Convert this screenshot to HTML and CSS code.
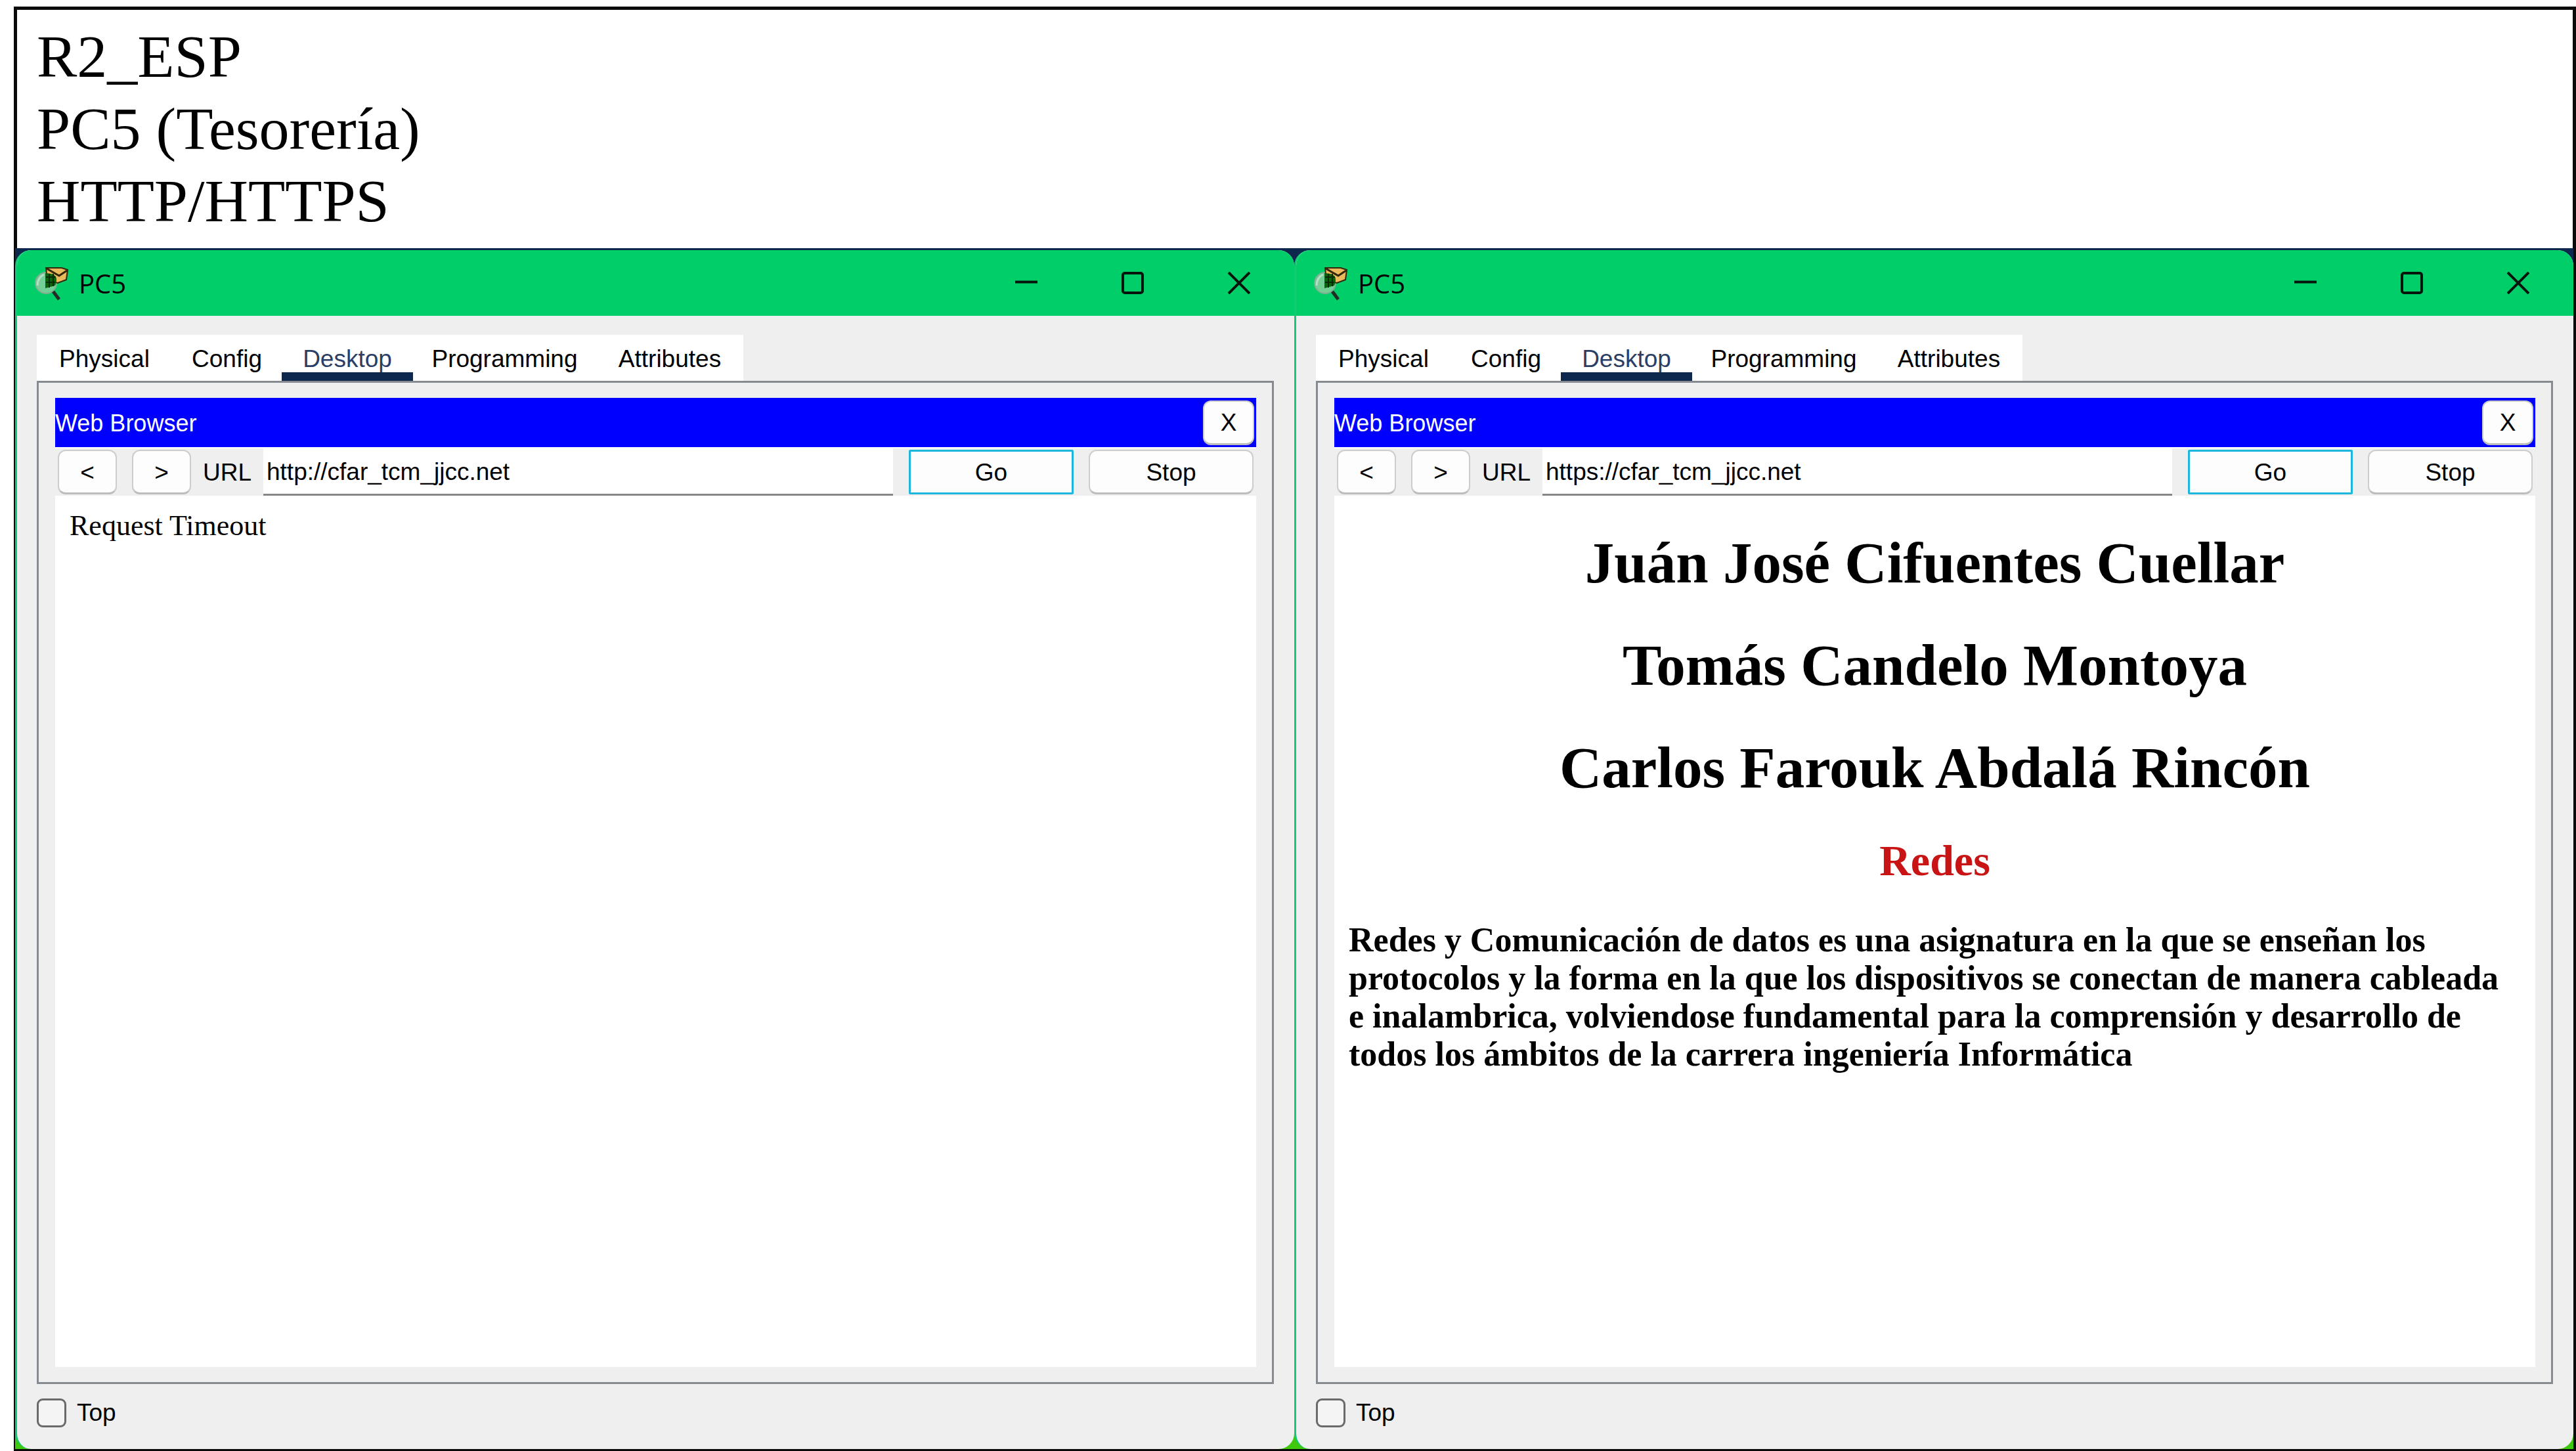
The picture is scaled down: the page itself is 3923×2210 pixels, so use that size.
FILE: index.html
```html
<!DOCTYPE html>
<html lang="es">
<head>
<meta charset="utf-8">
<title>R2_ESP - PC5 (Tesorería)</title>
<link rel="stylesheet" href="styles.css">
</head>
<body>
<main class="sheet">
  <header class="caption">
    <p>R2_ESP</p>
    <p>PC5 (Tesorería)</p>
    <p>HTTP/HTTPS</p>
  </header>
  <div class="windows">
    <section class="window">
      <div class="titlebar">
        <svg class="app-icon" viewBox="0 0 54 54" aria-hidden="true">
          <circle cx="18" cy="27" r="16" fill="#74cf97" stroke="#7fae92" stroke-width="2"/>
          <path d="M5 31Q5 19 15 14" fill="none" stroke="#b4e0c4" stroke-width="3"/>
          <path d="M18 4 42 4 51 7 49 22 36 27 20 23Z" fill="#e9b95c" stroke="#33270c" stroke-width="2"/>
          <path d="M19 5 38 16 50 8" fill="none" stroke="#33270c" stroke-width="3"/>
          <path d="M17 12Q34 12 34 22T28 32L17 35Z" fill="#0a640a"/>
          <path d="M18 18H33M18 26H32M23 13V34M29 13V32" stroke="#052a05" stroke-width="2"/>
          <path d="M29 40 38 52" stroke="#222b26" stroke-width="5"/>
        </svg>
        <h2 class="window-title">PC5</h2>
        <div class="controls">
          <button class="control" aria-label="Minimize"><svg viewBox="0 0 34 34"><path d="M0 15.5H34"/></svg></button>
          <button class="control" aria-label="Maximize"><svg viewBox="0 0 34 34"><rect x="2" y="2" width="30" height="30" rx="3"/></svg></button>
          <button class="control" aria-label="Close"><svg viewBox="0 0 34 34"><path d="M1 1 33 33M33 1 1 33"/></svg></button>
        </div>
      </div>
      <div class="window-body">
        <nav class="tabs">
          <button class="tab">Physical</button>
          <button class="tab">Config</button>
          <button class="tab active">Desktop</button>
          <button class="tab">Programming</button>
          <button class="tab">Attributes</button>
        </nav>
        <div class="panel">
          <div class="app-bar"><span class="app-name">Web Browser</span><button class="btn app-close">X</button></div>
          <form class="toolbar">
            <button type="button" class="btn nav-btn">&lt;</button>
            <button type="button" class="btn nav-btn">&gt;</button>
            <label class="url-label" for="url-1">URL</label>
            <input class="url" id="url-1" type="text" value="http://cfar_tcm_jjcc.net">
            <button type="button" class="btn go">Go</button>
            <button type="button" class="btn stop">Stop</button>
          </form>
          <article class="page"><p class="message">Request Timeout</p></article>
        </div>
        <label class="top-option"><input type="checkbox" class="check">Top</label>
      </div>
    </section>
    <section class="window">
      <div class="titlebar">
        <svg class="app-icon" viewBox="0 0 54 54" aria-hidden="true">
          <circle cx="18" cy="27" r="16" fill="#74cf97" stroke="#7fae92" stroke-width="2"/>
          <path d="M5 31Q5 19 15 14" fill="none" stroke="#b4e0c4" stroke-width="3"/>
          <path d="M18 4 42 4 51 7 49 22 36 27 20 23Z" fill="#e9b95c" stroke="#33270c" stroke-width="2"/>
          <path d="M19 5 38 16 50 8" fill="none" stroke="#33270c" stroke-width="3"/>
          <path d="M17 12Q34 12 34 22T28 32L17 35Z" fill="#0a640a"/>
          <path d="M18 18H33M18 26H32M23 13V34M29 13V32" stroke="#052a05" stroke-width="2"/>
          <path d="M29 40 38 52" stroke="#222b26" stroke-width="5"/>
        </svg>
        <h2 class="window-title">PC5</h2>
        <div class="controls">
          <button class="control" aria-label="Minimize"><svg viewBox="0 0 34 34"><path d="M0 15.5H34"/></svg></button>
          <button class="control" aria-label="Maximize"><svg viewBox="0 0 34 34"><rect x="2" y="2" width="30" height="30" rx="3"/></svg></button>
          <button class="control" aria-label="Close"><svg viewBox="0 0 34 34"><path d="M1 1 33 33M33 1 1 33"/></svg></button>
        </div>
      </div>
      <div class="window-body">
        <nav class="tabs">
          <button class="tab">Physical</button>
          <button class="tab">Config</button>
          <button class="tab active">Desktop</button>
          <button class="tab">Programming</button>
          <button class="tab">Attributes</button>
        </nav>
        <div class="panel">
          <div class="app-bar"><span class="app-name">Web Browser</span><button class="btn app-close">X</button></div>
          <form class="toolbar">
            <button type="button" class="btn nav-btn">&lt;</button>
            <button type="button" class="btn nav-btn">&gt;</button>
            <label class="url-label" for="url-2">URL</label>
            <input class="url" id="url-2" type="text" value="https://cfar_tcm_jjcc.net">
            <button type="button" class="btn go">Go</button>
            <button type="button" class="btn stop">Stop</button>
          </form>
          <article class="page">
            <h1 class="name">Juán José Cifuentes Cuellar</h1>
            <h1 class="name">Tomás Candelo Montoya</h1>
            <h1 class="name">Carlos Farouk Abdalá Rincón</h1>
            <h2 class="subject">Redes</h2>
            <p class="about">Redes y Comunicación de datos es una asignatura en la que se enseñan los<br>protocolos y la forma en la que los dispositivos se conectan de manera cableada<br>e inalambrica, volviendose fundamental para la comprensión y desarrollo de<br>todos los ámbitos de la carrera ingeniería Informática</p>
          </article>
        </div>
        <label class="top-option"><input type="checkbox" class="check">Top</label>
      </div>
    </section>
  </div>
</main>
</body>
</html>
```
FILE: styles.css
```css
* {
  box-sizing: border-box;
}

body {
  margin: 0;
  background: #fff;
  color: #000;
  font: 37px/44px "Liberation Sans", Arial, sans-serif;
}

h1, h2, p {
  margin: 0;
}

button, input {
  font: inherit;
  color: inherit;
  margin: 0;
}

.sheet {
  display: flex;
  flex-direction: column;
  min-height: 100vh;
  padding: 10px 0 0 21px;
}

.caption {
  border: 5px solid #0a0a0a;
  border-bottom: 0;
  padding: 16px 30px 17px;
  font: 92px/110px "Liberation Serif", "Times New Roman", serif;
}

.windows {
  flex: 1;
  display: grid;
  grid-template-columns: 1fr 1fr;
  border: solid #0a0a0a;
  border-width: 0 4px 3px 2px;
  padding-top: 3px;
  background: linear-gradient(#0d274d 50%, #3fc80c 50%);
}

.window {
  display: flex;
  flex-direction: column;
  border-left: 3px solid #14c877;
  border-radius: 24px;
  background: #efefef;
  overflow: hidden;
}

/* title bar */
.titlebar {
  display: flex;
  align-items: center;
  height: 100px;
  margin-left: -3px;
  padding: 0 67px 0 29px;
  background: #00ce68;
}

.app-icon {
  width: 54px;
  height: 54px;
}

.window-title {
  margin-left: 14px;
  padding-top: 2px;
  font: 400 40px/52px "Open Sans", "Noto Sans", sans-serif;
}

.controls {
  display: flex;
  gap: 128px;
  margin-left: auto;
}

.control {
  display: flex;
  padding: 0;
  border: 0;
  background: none;
}

.control svg {
  width: 34px;
  height: 34px;
  fill: none;
  stroke: #06140c;
  stroke-width: 4;
}

/* window content */
.window-body {
  flex: 1;
  display: flex;
  flex-direction: column;
  padding: 29px 31px 33px 30px;
}

.tabs {
  display: grid;
  grid-template-columns: 206px 167px 200px 279px 224px;
  align-self: flex-start;
  height: 70px;
  background: #fff;
}

.tab {
  padding: 3px 0 0;
  border: 0;
  background: none;
}

.active {
  color: #2b3f66;
  background: linear-gradient(#0d274d, #0d274d) bottom / 100% 13px no-repeat;
}

.panel {
  flex: 1;
  display: flex;
  flex-direction: column;
  border: 3px solid #868b92;
  padding: 23px 24px 23px 25px;
}

.app-bar {
  display: flex;
  align-items: center;
  justify-content: space-between;
  height: 75px;
  padding-right: 3px;
  background: #0000ff;
  color: #fff;
}

.app-name {
  padding-top: 2px;
  font-size: 36px;
}

.btn {
  height: 68px;
  padding: 2px 0 0;
  border: 2px solid #cdcdcd;
  border-bottom: 3px solid #bdbdbd;
  border-radius: 12px;
  background: #fdfdfd;
  color: #000;
}

.app-close {
  width: 78px;
}

.toolbar {
  display: flex;
  align-items: center;
  height: 74px;
  padding: 0 4px;
  border-top: 2px solid #fff;
}

.nav-btn {
  width: 90px;
}

.nav-btn + .nav-btn {
  margin-left: 23px;
}

.url-label {
  width: 92px;
  margin-left: 18px;
  padding-top: 2px;
}

.url {
  flex: 1;
  min-width: 0;
  height: 72px;
  padding: 2px 5px 0;
  border: 0;
  border-bottom: 3px solid #868686;
  background: #fff;
}

.go {
  width: 251px;
  margin: 0 23px 0 24px;
  border: 3px solid #1fb6dd;
  border-radius: 2px;
}

.stop {
  width: 251px;
}

.page {
  flex: 1;
  padding: 22px;
  background: #fff;
  font-family: "Liberation Serif", "Times New Roman", serif;
}

.message {
  font-size: 44px;
  line-height: 48px;
}

.name {
  padding-top: 30px;
  padding-bottom: 26px;
  font-size: 89px;
  line-height: 100px;
  text-align: center;
}

.subject {
  padding-top: 28px;
  font-size: 66px;
  line-height: 76px;
  text-align: center;
  color: #c81414;
}

.about {
  padding-top: 54px;
  font-size: 52px;
  font-weight: 700;
  line-height: 58px;
}

.top-option {
  display: flex;
  align-items: center;
  align-self: flex-start;
  gap: 16px;
  padding-top: 22px;
}

.check {
  appearance: none;
  width: 45px;
  height: 44px;
  border: 3px solid #6a6a6a;
  border-radius: 9px;
  background: #f4f4f4;
}
```
